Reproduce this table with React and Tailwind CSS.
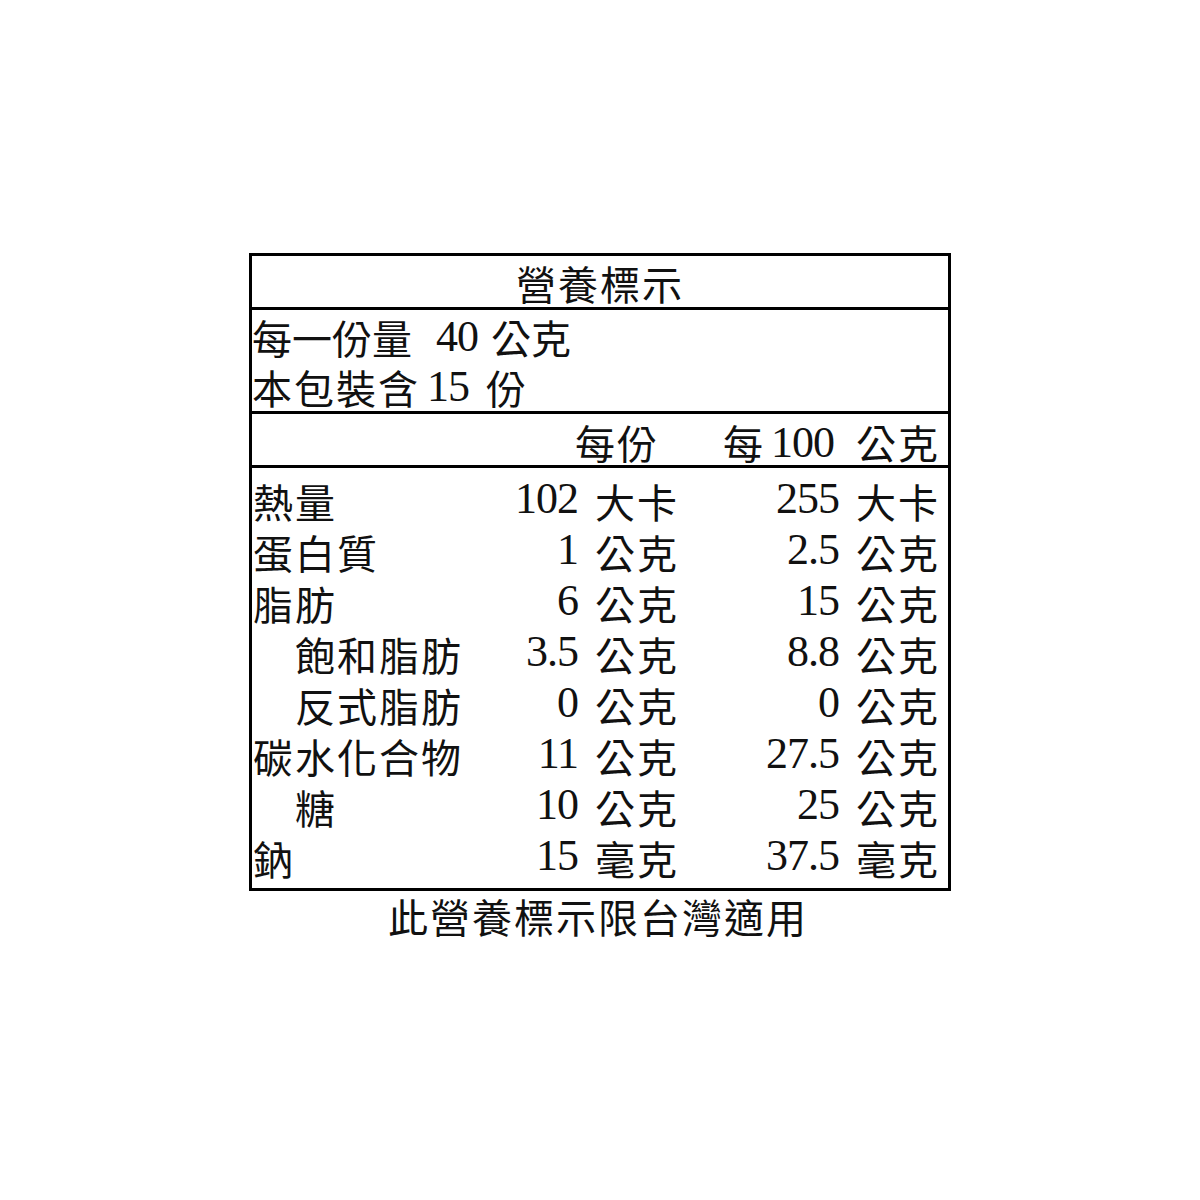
import React from 'react';

const rows = [
    { label: '熱量', a: '102', au: '大卡', b: '255', bu: '大卡' },
    { label: '蛋白質', a: '1', au: '公克', b: '2.5', bu: '公克' },
    { label: '脂肪', a: '6', au: '公克', b: '15', bu: '公克' },
    { label: '飽和脂肪', indent: true, a: '3.5', au: '公克', b: '8.8', bu: '公克' },
    { label: '反式脂肪', indent: true, a: '0', au: '公克', b: '0', bu: '公克' },
    { label: '碳水化合物', a: '11', au: '公克', b: '27.5', bu: '公克' },
    { label: '糖', indent: true, a: '10', au: '公克', b: '25', bu: '公克' },
    { label: '鈉', a: '15', au: '毫克', b: '37.5', bu: '毫克' },
];

const Num = ({ children, className = '' }) => (
    <span className={"font-['Liberation_Serif',serif] text-[44px] tracking-[-1px] " + className}>{children}</span>
);

const Value = ({ num, unit, width }) => (
    <div className={"flex items-center justify-end " + width}>
        <Num>{num}</Num>
        <span className="ml-[17px] pt-[6px] tracking-[2px]">{unit}</span>
    </div>
);

const App = () => {
    return (
        <div className="min-h-[1200px] bg-white pt-[253px] text-[#111] font-['Noto_Sans_CJK_TC',sans-serif] text-[40px]">
            <div className="mx-auto w-[702px] border-[3px] border-black">
                {/* title */}
                <div className="h-[54px] pt-[4px] leading-[47px] text-center tracking-[2px] border-b-[3px] border-black">
                    營養標示
                </div>
                {/* serving */}
                <div className="h-[104px] pt-[2px] border-b-[3px] border-black">
                    <div className="flex items-center h-[50px] leading-[50px]">
                        <span>每一份量</span>
                        <Num className="ml-[24px]">40</Num>
                        <span className="ml-[13px]">公克</span>
                    </div>
                    <div className="flex items-center h-[50px] leading-[50px]">
                        <span className="tracking-[2px]">本包裝含</span>
                        <Num className="ml-[7px]">15</Num>
                        <span className="ml-[17px]">份</span>
                    </div>
                </div>
                {/* column heads */}
                <div className="flex items-center h-[54px] pt-[6px] leading-[45px] pr-[8px] border-b-[3px] border-black">
                    <div className="flex-1"></div>
                    <div className="w-[200px] flex justify-end pr-[20px]">
                        <span className="tracking-[2px]">每份</span>
                    </div>
                    <div className="w-[261px] flex items-center justify-end">
                        <span className="tracking-[2px]">每</span>
                        <Num className="ml-[6px]">100</Num>
                        <span className="ml-[22px] tracking-[2px]">公克</span>
                    </div>
                </div>
                {/* values */}
                <div className="pt-[5px] pb-[7px]">
                    {rows.map((r) => (
                        <div key={r.label} className="flex items-center h-[51px] leading-[51px] pr-[8px]">
                            <div className={"flex-1 pt-[6px] tracking-[2px] " + (r.indent ? 'pl-[43px]' : 'pl-[1px]')}>
                                {r.label}
                            </div>
                            <Value num={r.a} unit={r.au} width="w-[200px]" />
                            <Value num={r.b} unit={r.bu} width="w-[261px]" />
                        </div>
                    ))}
                </div>
            </div>
            <div className="flex justify-center pr-[4px] h-[51px] leading-[51px] tracking-[2px]">
                此營養標示限台灣適用
            </div>
        </div>
    );
};

export default App;
